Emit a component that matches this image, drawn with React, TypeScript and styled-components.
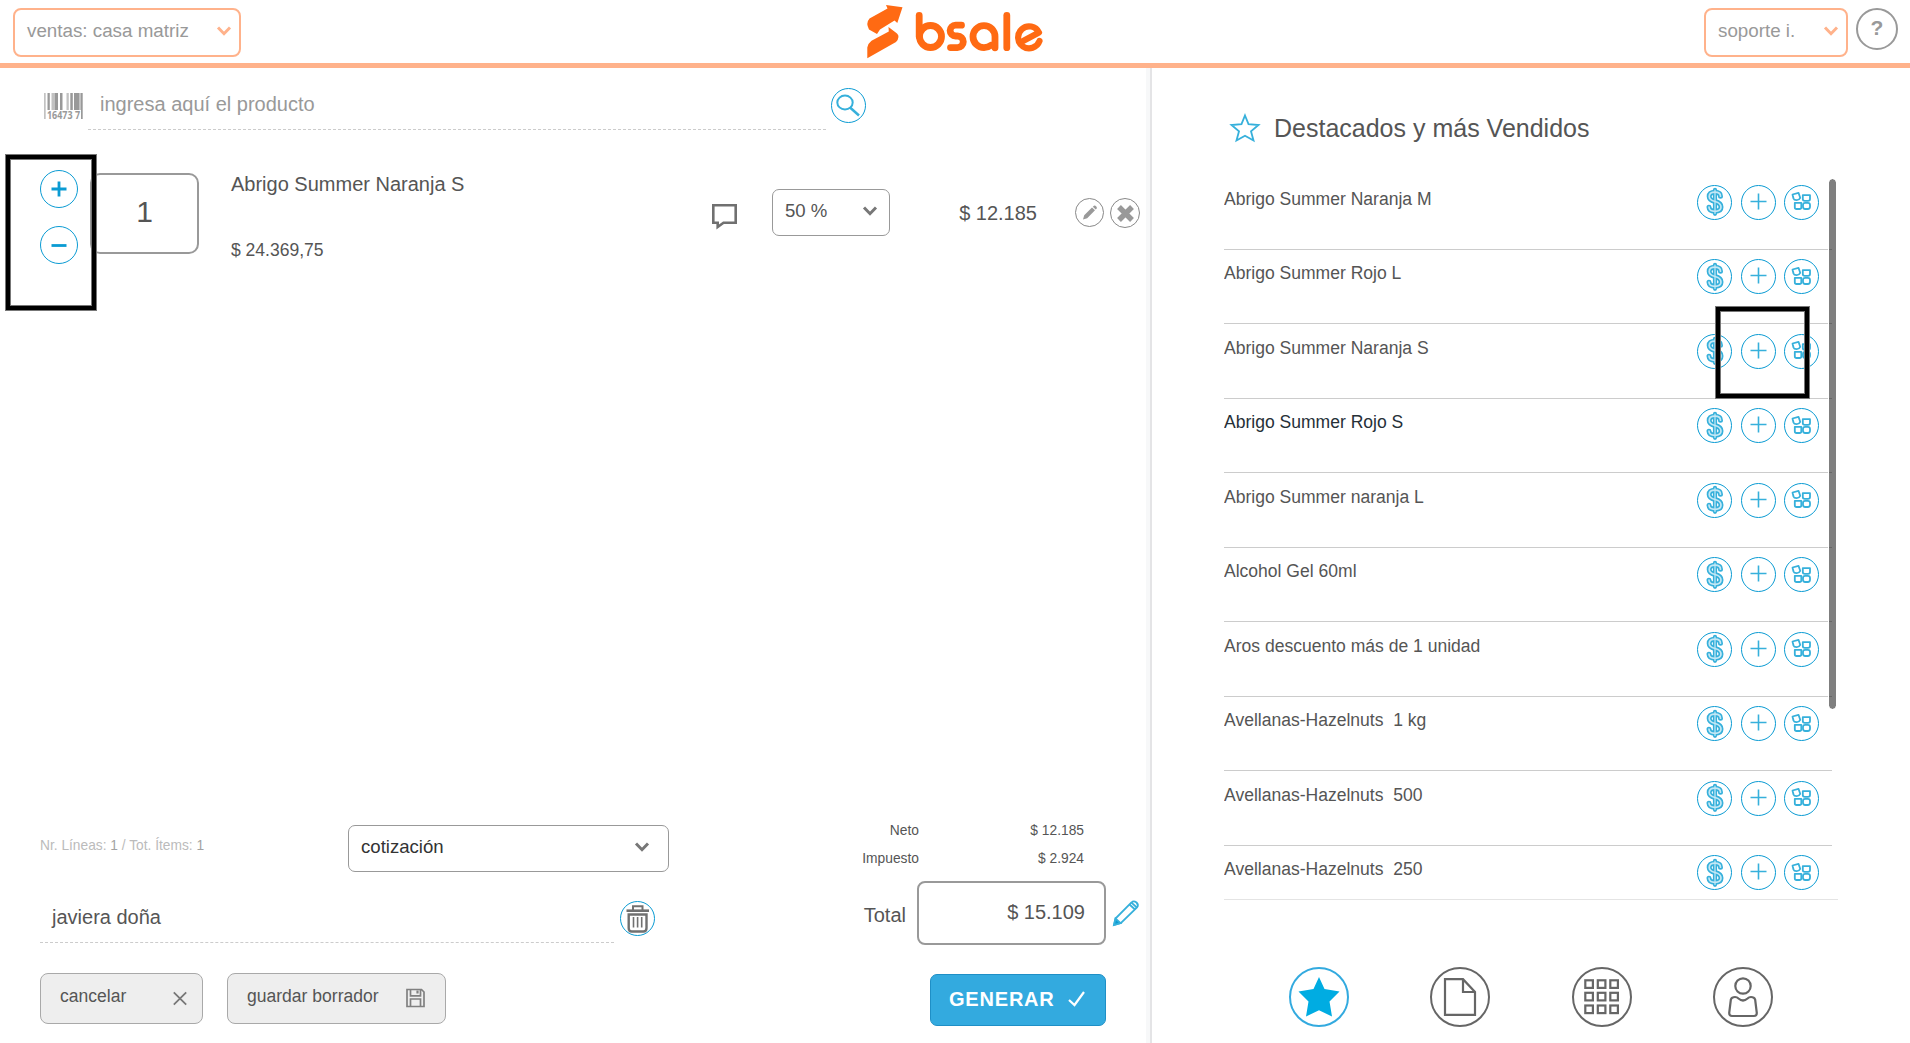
import * as React from 'react';
import styled, { createGlobalStyle } from 'styled-components';

const color = {
  accent: '#0a9bd3',
  accentSoft: '#36b0db',
  orange: '#ffb28b',
  brand: '#ff6a13',
  text: '#555',
  muted: '#999',
  line: '#ccc',
};

const GlobalStyle = createGlobalStyle`
  * {
    box-sizing: border-box;
  }

  body {
    margin: 0;
    background: #fff;
    color: ${color.text};
    font-family: 'Liberation Sans', Arial, sans-serif;
    font-size: 17.55px;
    line-height: 20px;
  }

  svg {
    display: block;
    flex-shrink: 0;
    overflow: visible;
  }

  button {
    padding: 0;
    font-family: inherit;
    cursor: pointer;
  }
`;

const Page = styled.div`
  display: flex;
  flex-direction: column;
  width: 1910px;
  height: 1043px;
  overflow: hidden;
`;

const Header = styled.header`
  display: flex;
  align-items: flex-start;
  justify-content: space-between;
  height: 68px;
  padding: 8px 12px 0 13px;
  border-bottom: 5px solid ${color.orange};
`;

const HeaderSide = styled.div<{ $end?: boolean }>`
  display: flex;
  flex: 1;
  gap: 8px;
  justify-content: ${(props) => (props.$end ? 'flex-end' : 'flex-start')};
`;

const HeaderSelect = styled.div<{ $width: number }>`
  display: flex;
  align-items: center;
  justify-content: space-between;
  width: ${(props) => props.$width}px;
  height: 49px;
  padding: 0 8px 3px 12px;
  color: ${color.muted};
  border: 2px solid ${color.orange};
  border-radius: 8px;
  font-size: 18.8px;
`;

const Help = styled.button`
  width: 42px;
  height: 42px;
  padding-bottom: 2px;
  color: ${color.muted};
  background: none;
  border: 2px solid ${color.muted};
  border-radius: 50%;
  font-size: 21px;
  font-weight: bold;
`;

const Logo = styled.div`
  margin-top: -4px;
`;

const Main = styled.main`
  display: flex;
  flex: 1;
`;

const Sale = styled.section`
  display: flex;
  flex-direction: column;
  width: 1152px;
  border-right: 2px solid #e4e4e6;
  box-shadow: inset -4px 0 0 #f7f8f9;
`;

const Search = styled.div`
  display: flex;
  align-items: flex-start;
  padding: 20px 0 0 44px;
`;

const Barcode = styled.div`
  padding-top: 5px;
`;

const SearchField = styled.div`
  width: 738px;
  height: 42px;
  margin: 0 5px 0 5px;
  padding: 6px 12px;
  color: ${color.muted};
  border-bottom: 1px dashed ${color.line};
  font-size: 20px;
`;

const Circle = styled.button<{ $size?: number; $tone?: string; $line?: number }>`
  display: flex;
  align-items: center;
  justify-content: center;
  flex-shrink: 0;
  width: ${(props) => props.$size || 35}px;
  height: ${(props) => props.$size || 35}px;
  background: none;
  border: ${(props) => props.$line || 1}px solid ${(props) => props.$tone || color.accent};
  border-radius: 50%;
`;

const Item = styled.div`
  display: flex;
  align-items: flex-start;
  height: 157px;
  margin-top: 24px;
  padding-left: 5px;
`;

const Frame = styled.div<{ $width: number; $height: number }>`
  position: relative;
  z-index: 1;
  width: ${(props) => props.$width}px;
  height: ${(props) => props.$height}px;
  border: 1px solid #777;
  box-shadow: inset 0 0 0 4px #000, inset 0 0 0 5px #777;
`;

const Stepper = styled(Frame)`
  display: flex;
  flex-direction: column;
  gap: 18px;
  padding: 15px 0 0 34px;
`;

const Quantity = styled.div`
  width: 109px;
  height: 81px;
  margin: 19px 0 0 -7px;
  padding-top: 20px;
  border: 2px solid ${color.muted};
  border-radius: 10px;
  font-size: 30px;
  line-height: 34px;
  text-align: center;
`;

const Description = styled.div`
  display: flex;
  flex-direction: column;
  gap: 46px;
  width: 513px;
  padding: 20px 0 0 32px;
`;

const ItemName = styled.div`
  font-size: 20px;
`;

const Comment = styled.div`
  width: 60px;
  padding-top: 50px;
`;

const Select = styled.div<{ $width: number; $dark?: boolean; $inset: number }>`
  display: flex;
  align-items: center;
  justify-content: space-between;
  width: ${(props) => props.$width}px;
  height: 47px;
  padding: 0 ${(props) => props.$inset}px 3px 12px;
  color: ${(props) => (props.$dark ? '#333' : color.text)};
  border: 1px solid ${color.muted};
  border-radius: 7px;
  font-size: 18.6px;
`;

const Discount = styled.div`
  padding-top: 35px;
`;

const Amount = styled.div`
  width: 147px;
  padding-top: 49px;
  font-size: 20px;
  text-align: right;
`;

const ItemActions = styled.div`
  display: flex;
  gap: 6px;
  padding: 44px 0 0 38px;
`;

const Footer = styled.footer`
  display: flex;
  align-items: flex-end;
  justify-content: space-between;
  margin-top: auto;
  padding: 0 44px 17px 40px;
`;

const FooterLeft = styled.div`
  display: flex;
  flex-direction: column;
  width: 629px;
  padding-bottom: 2px;
`;

const DocumentRow = styled.div`
  display: flex;
  justify-content: space-between;
`;

const Counter = styled.div`
  padding-top: 11px;
  color: #bbb;
  font-size: 13.75px;

  b {
    color: #a2a2a2;
    font-weight: normal;
  }
`;

const CustomerRow = styled.div`
  display: flex;
  gap: 6px;
  padding-top: 29px;
`;

const Customer = styled.div`
  width: 574px;
  height: 42px;
  padding: 6px 12px;
  border-bottom: 1px dashed ${color.line};
  font-size: 20px;
`;

const Buttons = styled.div`
  display: flex;
  gap: 24px;
  margin-top: 30px;
`;

const GreyButton = styled.button<{ $width: number; $end: number }>`
  display: flex;
  align-items: center;
  justify-content: space-between;
  width: ${(props) => props.$width}px;
  height: 51px;
  padding: 0 ${(props) => props.$end}px 0 19px;
  color: ${color.text};
  background: #eee;
  border: 1px solid #a9a9a9;
  border-radius: 8px;
  font-size: 17.55px;

  span {
    padding-bottom: 4px;
  }
`;

const Totals = styled.div`
  display: flex;
  flex-direction: column;
  align-items: flex-end;
  width: 276px;
`;

const TaxRow = styled.div`
  display: flex;
  justify-content: flex-end;
  height: 28px;
  padding: 0 22px 0 0;
  font-size: 13.8px;
  text-align: right;
`;

const TaxValue = styled.div`
  width: 165px;
`;

const TotalRow = styled.div`
  display: flex;
  align-items: center;
  gap: 11px;
  margin: 4px -33px 0 0;
  font-size: 20px;
`;

const TotalLabel = styled.div`
  padding-top: 4px;
`;

const TotalValue = styled.div`
  width: 189px;
  height: 64px;
  margin-right: -4px;
  padding: 19px 19px;
  border: 2px solid ${color.muted};
  border-radius: 8px;
  text-align: right;
`;

const Generate = styled.button`
  display: flex;
  align-items: center;
  justify-content: space-between;
  width: 176px;
  height: 52px;
  margin-top: 29px;
  padding: 0 20px 2px 18px;
  color: #fff;
  background: #33aadf;
  border: 1px solid #1f8fc6;
  border-radius: 7px;
  font-size: 20px;
  font-weight: bold;
  letter-spacing: 0.8px;
`;

const Featured = styled.aside`
  display: flex;
  flex: 1;
  flex-direction: column;
  padding: 45px 72px 0 72px;
`;

const Title = styled.h1`
  display: flex;
  align-items: center;
  gap: 14px;
  height: 30px;
  margin: 0 0 32.3px;
  padding-left: 6px;
  font-size: 25px;
  font-weight: normal;
`;

const List = styled.div`
  position: relative;
  height: 724.7px;
  overflow: hidden;
  border-bottom: 1px solid #e4e4e4;
`;

const Product = styled.div<{ $active?: boolean }>`
  display: flex;
  justify-content: space-between;
  width: 608px;
  height: 74.5px;
  padding: 9.5px 13px 0 0;
  color: ${(props) => (props.$active ? '#263038' : color.text)};
  border-bottom: 1px solid ${color.line};
  white-space: pre;
`;

const ProductName = styled.div`
  padding-top: 3.9px;
`;

const Actions = styled.div`
  display: flex;
  gap: 8.5px;
`;

const Thumb = styled.div`
  position: absolute;
  top: 2.7px;
  right: 1px;
  width: 9px;
  height: 532px;
  background: rgba(0, 0, 0, 0.5);
  background-clip: padding-box;
  border: 1px solid #fff;
  border-radius: 5px;
`;

const Highlight = styled(Frame)`
  position: absolute;
  top: 130.7px;
  right: 28px;
`;

const Tabs = styled.nav`
  display: flex;
  gap: 81.3px;
  padding: 67px 0 0 65px;
`;

const Chevron = ({ stroke = '#777' }: { stroke?: string }) => (
  <svg width="14" height="10" viewBox="0 0 14 10" fill="none" stroke={stroke} strokeWidth="3">
    <path d="M1 1.5 L7 7.7 L13 1.5" />
  </svg>
);

const LogoMark = () => (
  <svg width="178" height="56" viewBox="0 0 178 56">
    <g fill={color.brand}>
      <path d="M19 1 L35.5 3.2 L30.3 19 L27.5 16.5 L13 25.500 L10 30 L2 25.500 Q-1.500 19 2.500 14.500 L20.5 4.5 Z" />
      <path d="M21.5 23 L30 29.5 Q33.500 33 29 38 L.3 54.300 L.3 43.500 Q1 39.500 4.500 36.800 L21.800 27.500 Z" />
    </g>
    <g fill="none" stroke={color.brand} strokeWidth="6.800" strokeLinecap="round" strokeLinejoin="round">
      <path d="M52.200 11.500 V32.500" />
      <circle cx="63.500" cy="32.500" r="11" />
      <path d="M94.500 21.200 H88.500 A5 5 0 0 0 88.500 32 H90.500 A5.400 5.400 0 0 1 90.500 43.600 H83.500" />
      <path d="M128 43.800 V32.500 A11 11 0 1 0 117 43.600 Q121 43.500 124.500 41" />
      <path d="M139.800 11.500 V43.700" />
      <path d="M157 36.500 L172 28.500 A11 11 0 1 0 172.500 37" strokeWidth="6.200" />
    </g>
  </svg>
);

const BarcodeIcon = () => (
  <svg width="39" height="26" viewBox="0 0 39 26">
    <g fill="#999">
      <path d="M3.500 0 h2.300 v17 h-2.300z M11 0 h3 v17 h-3z M16 0 h2.500 v17 h-2.500z M26.300 0 h2.500 v17 h-2.500z M30 0 h5 v17 h-5z M37 0 h1.700 v26 h-1.700z" />
      <path opacity=".6" d="M0 0 h1.700 v26 h-1.700z M7.500 0 h3.500 v17 h-3.500z M22.500 0 h2.300 v17 h-2.300z M35 0 h2 v17 h-2z" />
    </g>
    <text x="3" y="25.500" fontSize="10.500" fontWeight="700" fontFamily="Open Sans, sans-serif" fill="#999" textLength="33" lengthAdjust="spacingAndGlyphs">
      16473 7
    </text>
  </svg>
);

const SearchIcon = () => (
  <svg width="24" height="24" viewBox="0 0 24 24" fill="none" stroke={color.accentSoft} strokeWidth="2">
    <ellipse cx="8" cy="8.500" rx="7.700" ry="6.900" />
    <path d="M13 13.500 L22 21.500" strokeWidth="2.400" />
  </svg>
);

const PlusIcon = ({ thick }: { thick?: boolean }) => (
  <svg width="17" height="17" viewBox="0 0 17 17" fill="none" stroke={thick ? color.accent : color.accentSoft}>
    <path
      d={thick ? 'M.5 8 H15.500 M8 .5 V15.500' : 'M.5 7.500 H16.500 M8.500 -.5 V15.500'}
      strokeWidth={thick ? 2.8 : 1.6}
    />
  </svg>
);

const MinusIcon = () => (
  <svg width="17" height="17" viewBox="0 0 17 17" stroke={color.accent} strokeWidth="2.800">
    <path d="M.5 8.500 H15.500" />
  </svg>
);

const DollarIcon = () => (
  <svg width="18" height="30" viewBox="0 0 18 30" fill="none" strokeLinecap="round">
    <g stroke={color.accentSoft} strokeWidth="5">
      <path d="M9 2.800 V26.800" strokeWidth="4.200" />
      <path d="M14.500 9.200 Q14.500 5.200 9 5.200 Q3.200 5.200 3.200 9.500 Q3.200 13 9 14.500 Q15 16 15 20 Q15 24.300 9 24.300 Q3.200 24.300 3 20.200" />
    </g>
    <g stroke="#c4e8f5" strokeWidth="1.700">
      <path d="M14.500 9.200 Q14.500 5.200 9 5.200 Q3.200 5.200 3.200 9.500 Q3.200 13 9 14.500 Q15 16 15 20 Q15 24.300 9 24.300 Q3.200 24.300 3 20.200" />
      <path d="M9 3 V26.500" strokeWidth="1.200" />
    </g>
  </svg>
);

const VariantsIcon = () => (
  <svg width="19" height="18" viewBox="0 0 19 18" fill="none" stroke={color.accentSoft} strokeWidth="1.800" strokeLinejoin="round">
    <path d="M.5 1.500 L6.500 -.2 L8.200 4.800 Q7 7.300 4.500 7.200 Q2 7.200 1.500 5.500 Z" />
    <path d="M10.800 2.200 H18 V6 Q18 7.800 16 7.800 H12.800 Q10.800 7.800 10.800 6 Z" />
    <path d="M2.800 9.800 H9.300 V14.200 Q9.300 16 7.500 16 H4.600 Q2.800 16 2.800 14.200 Z" />
    <rect x="11" y="9.800" width="7" height="6.200" rx="2.200" />
  </svg>
);

const CommentIcon = () => (
  <svg width="25" height="26" viewBox="0 0 25 26" fill="none" stroke="#707070" strokeWidth="2.600">
    <path d="M1.300 1.300 H23.700 V18.700 H11.500 L5.700 23 V18.700 H1.300 Z" />
  </svg>
);

const PencilIcon = () => (
  <svg width="14" height="14" viewBox="0 0 14 14" fill="#999">
    <path d="M0 13.500 L1.200 9.300 L9 1.500 L12 4.300 L4.200 12.300 Z M9.800 .8 L11 -.3 Q12 -.8 13.500 .7 Q14.300 2 13.700 2.600 L12.700 3.600 Z" />
  </svg>
);

const RemoveIcon = () => (
  <svg width="17" height="17" viewBox="0 0 17 17" stroke="#999" strokeWidth="5.400">
    <path d="M2 2 L15 15 M15 2 L2 15" />
  </svg>
);

const TrashIcon = () => (
  <svg width="24" height="28" viewBox="0 0 24 28" fill="none" stroke="#707070">
    <path d="M.5 5.700 H23" strokeWidth="2.600" />
    <path d="M7 5 V1.200 H16.500 V5" strokeWidth="2" />
    <path d="M2.700 9.500 H20.500 V23 Q20.500 26.500 17.500 26.500 H5.700 Q2.700 26.500 2.700 23 Z" strokeWidth="2.400" />
    <path d="M7.500 12 V22.500 M11.600 12 V22.500 M15.700 12 V22.500" strokeWidth="1.600" />
  </svg>
);

const CloseIcon = () => (
  <svg width="14" height="14" viewBox="0 0 14 14" stroke="#777" strokeWidth="1.800">
    <path d="M.8 .3 L13.200 12.700 M13.200 .3 L.8 12.700" />
  </svg>
);

const SaveIcon = () => (
  <svg width="19" height="19" viewBox="0 0 19 19" fill="none" stroke="#808080" strokeWidth="1.700">
    <path d="M1 .5 H15.500 L18 3 V17.500 H1 Z M4.500 .5 V6.800 H14.500 V.5 M4.500 17.500 V10 H14.500 V17.500" />
    <path d="M11.500 1.500 V4.500" strokeWidth="2.200" />
  </svg>
);

const EditIcon = () => (
  <svg width="26" height="26" viewBox="0 0 26 26" fill="none" stroke={color.accentSoft} strokeWidth="1.800">
    <path d="M1 25 L2.500 18.500 L18.500 2.500 Q20.500 .3 23.500 2.500 Q26 5 24 7.500 L8 23 Z" />
    <path d="M16.500 4.500 L22 9.500 M18.500 2.700 L23.800 7.500" />
    <path d="M1 25 L2.500 18.500 L7.500 23 Z" fill={color.accent} />
  </svg>
);

const CheckIcon = () => (
  <svg width="17" height="16" viewBox="0 0 17 16" fill="none" stroke="#fff" strokeWidth="2.200">
    <path d="M1 9 L6.500 14 L16 1" />
  </svg>
);

const StarIcon = () => (
  <svg width="30" height="28" viewBox="0 0 30 28" fill="none" stroke={color.accentSoft} strokeWidth="1.800">
    <path d="M15 1.500 L18.500 10.200 L28.500 11 L21 17.300 L23.500 26.500 L15 21.700 L6.500 26.500 L9 17.300 L1.500 11 L11.500 10.200 Z" />
  </svg>
);

const StarSolidIcon = () => (
  <svg width="42" height="40" viewBox="0 0 42 40" fill="#00ace2">
    <path d="M21 0 L26.500 12 L41.500 14.500 L31.500 24.500 L34 39.500 L21 33.200 L8 39.500 L10.500 24.500 L.5 14.500 L15.500 12 Z" />
  </svg>
);

const PageIcon = () => (
  <svg width="32" height="38" viewBox="0 0 32 38" fill="none" stroke="#666" strokeWidth="2.200">
    <path d="M1 1.200 H19 L31 14 V36.800 H1 Z M19 1.200 V14 H31" />
  </svg>
);

const GridIcon = () => (
  <svg width="36" height="36" viewBox="0 0 36 36" fill="none" stroke="#666" strokeWidth="2.200">
    {[1.3, 13.8, 26.5].map((y) => [1.3, 13.8, 26.3].map((x) => <rect key={`${x}-${y}`} x={x} y={y} width="7.600" height="7.600" />))}
  </svg>
);

const PersonIcon = () => (
  <svg width="30" height="40" viewBox="0 0 30 40" fill="none" stroke="#666" strokeWidth="2.200" strokeLinejoin="round">
    <circle cx="15" cy="9" r="7.700" />
    <path d="M5.500 20.200 Q8.500 19.500 10.500 21.500 Q15 25.500 19.500 21.500 Q21.500 19.500 24.500 20.200 Q27 20.800 27.200 23 L28.800 36 Q28.800 39 26 39 H4 Q1.200 39 1.200 36 L2.800 23 Q3 20.800 5.500 20.200 Z" />
  </svg>
);

const products = [
  'Abrigo Summer Naranja M',
  'Abrigo Summer Rojo L',
  'Abrigo Summer Naranja S',
  'Abrigo Summer Rojo S',
  'Abrigo Summer naranja L',
  'Alcohol Gel 60ml',
  'Aros descuento más de 1 unidad',
  'Avellanas-Hazelnuts  1 kg',
  'Avellanas-Hazelnuts  500',
  'Avellanas-Hazelnuts  250',
];

const App = () => (
  <Page>
    <GlobalStyle />
    <Header>
      <HeaderSide>
        <HeaderSelect $width={228}>
          ventas: casa matriz
          <Chevron stroke={color.orange} />
        </HeaderSelect>
      </HeaderSide>
      <Logo>
        <LogoMark />
      </Logo>
      <HeaderSide $end>
        <HeaderSelect $width={144}>
          soporte i.
          <Chevron stroke={color.orange} />
        </HeaderSelect>
        <Help>?</Help>
      </HeaderSide>
    </Header>
    <Main>
      <Sale>
        <Search>
          <Barcode>
            <BarcodeIcon />
          </Barcode>
          <SearchField>ingresa aquí el producto</SearchField>
          <Circle>
            <SearchIcon />
          </Circle>
        </Search>
        <Item>
          <Stepper $width={92} $height={157}>
            <Circle $size={38}>
              <PlusIcon thick />
            </Circle>
            <Circle $size={38}>
              <MinusIcon />
            </Circle>
          </Stepper>
          <Quantity>1</Quantity>
          <Description>
            <ItemName>Abrigo Summer Naranja S</ItemName>
            <div>$ 24.369,75</div>
          </Description>
          <Comment>
            <CommentIcon />
          </Comment>
          <Discount>
            <Select $width={118} $inset={12}>
              50 %
              <Chevron />
            </Select>
          </Discount>
          <Amount>$ 12.185</Amount>
          <ItemActions>
            <Circle $size={29} $tone="#888">
              <PencilIcon />
            </Circle>
            <Circle $size={30} $tone="#888">
              <RemoveIcon />
            </Circle>
          </ItemActions>
        </Item>
        <Footer>
          <FooterLeft>
            <DocumentRow>
              <Counter>
                Nr. Líneas: <b>1</b> / Tot. Ítems: <b>1</b>
              </Counter>
              <Select $width={321} $inset={19} $dark>
                cotización
                <Chevron />
              </Select>
            </DocumentRow>
            <CustomerRow>
              <Customer>javiera doña</Customer>
              <Circle>
                <TrashIcon />
              </Circle>
            </CustomerRow>
            <Buttons>
              <GreyButton $width={163} $end={15}>
                <span>cancelar</span>
                <CloseIcon />
              </GreyButton>
              <GreyButton $width={219} $end={20}>
                <span>guardar borrador</span>
                <SaveIcon />
              </GreyButton>
            </Buttons>
          </FooterLeft>
          <Totals>
            <TaxRow>
              <div>Neto</div>
              <TaxValue>$ 12.185</TaxValue>
            </TaxRow>
            <TaxRow>
              <div>Impuesto</div>
              <TaxValue>$ 2.924</TaxValue>
            </TaxRow>
            <TotalRow>
              <TotalLabel>Total</TotalLabel>
              <TotalValue>$ 15.109</TotalValue>
              <EditIcon />
            </TotalRow>
            <Generate>
              GENERAR
              <CheckIcon />
            </Generate>
          </Totals>
        </Footer>
      </Sale>
      <Featured>
        <Title>
          <StarIcon />
          Destacados y más Vendidos
        </Title>
        <List>
          {products.map((name) => (
            <Product key={name} $active={name === 'Abrigo Summer Rojo S'}>
              <ProductName>{name}</ProductName>
              <Actions>
                <Circle>
                  <DollarIcon />
                </Circle>
                <Circle>
                  <PlusIcon />
                </Circle>
                <Circle>
                  <VariantsIcon />
                </Circle>
              </Actions>
            </Product>
          ))}
          <Thumb />
          <Highlight $width={95} $height={93} />
        </List>
        <Tabs>
          <Circle $size={60} $line={2} $tone="#33aadf">
            <StarSolidIcon />
          </Circle>
          <Circle $size={60} $line={2} $tone="#666">
            <PageIcon />
          </Circle>
          <Circle $size={60} $line={2} $tone="#666">
            <GridIcon />
          </Circle>
          <Circle $size={60} $line={2} $tone="#666">
            <PersonIcon />
          </Circle>
        </Tabs>
      </Featured>
    </Main>
  </Page>
);

export default App;
